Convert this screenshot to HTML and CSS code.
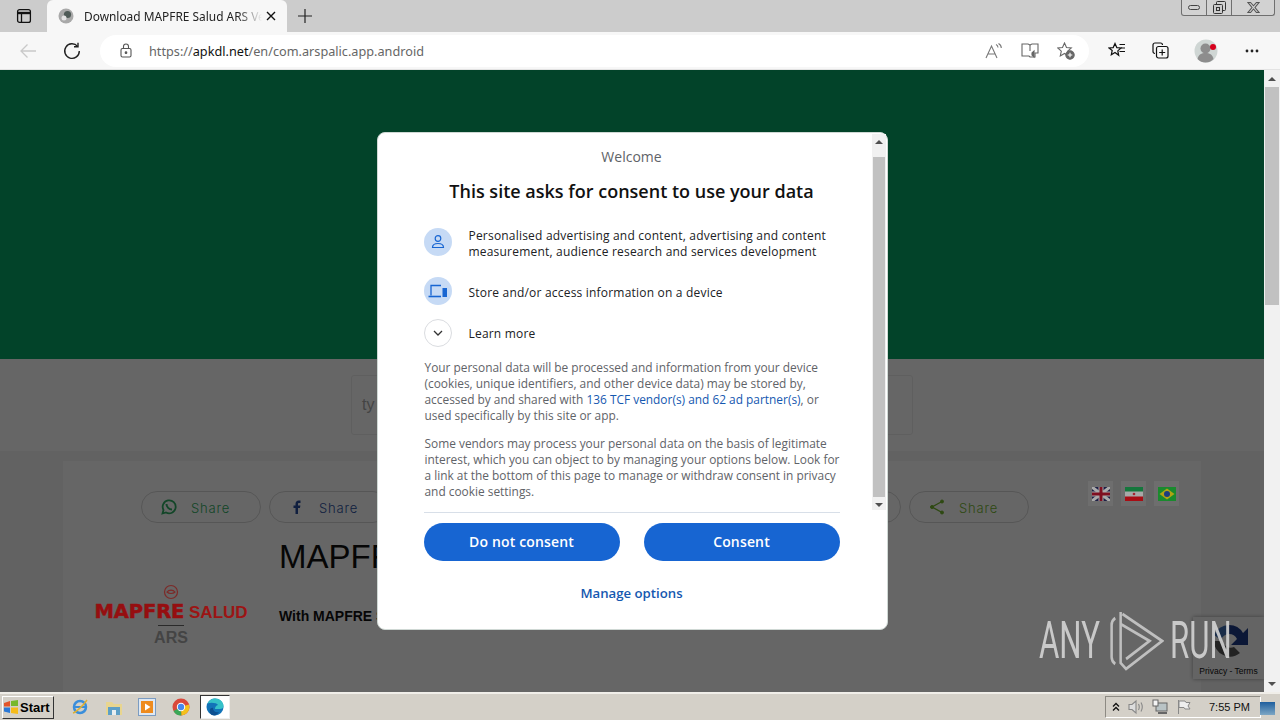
FILE: index.html
```html
<!DOCTYPE html>
<html lang="en">
<head>
<meta charset="utf-8">
<title>Download MAPFRE Salud ARS</title>
<link rel="stylesheet" href="styles.css">
</head>
<body>
<div class="tabstrip">
  <div class="tabside">
    <svg width="16" height="16" viewBox="0 0 16 16" fill="none" stroke="#111" stroke-width="1.3"><rect x="1.6" y="1.6" width="12.8" height="12.8" rx="2"/><path d="M1.6 5h12.8" stroke-width="2.4"/><path d="M5.5 5v9.4"/></svg>
  </div>
  <div class="tab">
    <svg width="16" height="16" viewBox="0 0 16 16"><circle cx="8" cy="8" r="7.5" fill="#a9a9a9"/><circle cx="9.5" cy="6.5" r="3.6" fill="#4f5b57"/><circle cx="6" cy="10" r="2.5" fill="#e3e3e3"/></svg>
    <span class="tabtitle">Download MAPFRE Salud ARS Ve</span>
    <svg class="tabclose" width="10" height="10" viewBox="0 0 10 10" stroke="#111" stroke-width="1.4"><path d="M1 1l8 8M9 1l-8 8"/></svg>
  </div>
  <svg class="newtab" width="16" height="16" viewBox="0 0 16 16" stroke="#222" stroke-width="1.2"><path d="M8 1v14M1 8h14"/></svg>
  <div class="winctl">
    <span class="wbtn"><svg width="12" height="6" viewBox="0 0 12 6" fill="none" stroke="#444"><rect x=".5" y=".5" width="11" height="4" rx="2"/></svg></span>
    <span class="wbtn"><svg width="13" height="13" viewBox="0 0 13 13" fill="none" stroke="#333"><rect x="3.5" y=".5" width="9" height="9" rx="1"/><rect x=".5" y="3.5" width="9" height="9" rx="1" fill="#ccc"/><rect x="3.5" y="6.5" width="3" height="3"/></svg></span>
    <span class="wbtn wclose"><svg width="13" height="11" viewBox="0 0 13 11" stroke="#555" stroke-width="1.1" fill="none"><path d="M1 .5h2.5l3 3.3 3-3.3H12L8 5.500l4 5H9.500l-3-3.500-3 3.500H1l4-5z"/></svg></span>
  </div>
</div>

<div class="toolbar">
  <svg class="back" width="18" height="16" viewBox="0 0 18 16" fill="none" stroke="#c9c9c9" stroke-width="1.3"><path d="M17 8H2M8.500 1.500L2 8l6.500 6.500"/></svg>
  <svg class="reload" width="18" height="18" viewBox="0 0 18 18" fill="none" stroke="#222" stroke-width="1.4"><path d="M14.600 4.400A7.300 7.300 0 1 0 16.300 9"/><path d="M15 .8v4h-4"/></svg>
  <div class="omnibox">
    <svg width="12" height="15" viewBox="0 0 12 15" fill="none" stroke="#555" stroke-width="1.1"><rect x="1" y="5.500" width="10" height="8.500" rx="1.500"/><path d="M3.500 5.500V3.500a2.500 2.500 0 0 1 5 0v2"/><circle cx="6" cy="9.700" r=".8" fill="#555"/></svg>
    <span class="url">https://<b>apkdl.net</b>/en/com.arspalic.app.android</span>
    <span class="omni-icons">
      <svg width="18" height="16" viewBox="0 0 18 16" fill="none" stroke="#777" stroke-width="1.1"><path d="M1 15L6.500 3 12 15M3 11h7"/><path d="M11 1.500c1.500.8 2 2 2 3M13.500 .5c1.800 1 2.800 2.800 2.800 4.500"/></svg>
      <svg width="18" height="16" viewBox="0 0 18 16" fill="none" stroke="#666" stroke-width="1.1"><path d="M1 1h6l2 1 2-1h6v9h-3v4H9l-1-1H1z"/><path d="M9 2v6"/><path d="M11 10l2-2v6l-2-2z" fill="#666"/></svg>
      <svg width="18" height="18" viewBox="0 0 18 18" fill="none" stroke="#666" stroke-width="1.100"><path d="M7.500 1l2 4.500 4.800.5-3.600 3.200 1 4.800-4.200-2.500-4.200 2.500 1-4.800L.7 6l4.800-.5z"/><circle cx="13" cy="13" r="4.200" fill="#666"/><path d="M13 10.700v4.600M10.700 13h4.600" stroke="#fff"/></svg>
    </span>
  </div>
  <div class="tool-icons">
    <svg width="18" height="17" viewBox="0 0 18 17" fill="none" stroke="#111" stroke-width="1.200"><path d="M7 1.500l1.800 4.100 4.200.4-3.200 2.900.9 4.400L7 10.500l-3.700 2.300.9-4.400L1 6l4.200-.4z"/><path d="M11.500 2.500H17M13 6h4M11.500 9.500H17"/></svg>
    <svg width="17" height="17" viewBox="0 0 17 17" fill="none" stroke="#111" stroke-width="1.200"><path d="M3 11.500C1.800 11.500 1 10.700 1 9.500V3c0-1.200.8-2 2-2h5.500c1.200 0 2 .8 2 2"/><rect x="4.500" y="4.500" width="11.500" height="11.500" rx="2"/><path d="M10.200 7.500v6M7.200 10.500h6"/></svg>
    <span class="avatar">
      <svg width="24" height="24" viewBox="0 0 24 24"><circle cx="12" cy="12" r="11.500" fill="#cfd6d4"/><circle cx="11.500" cy="9.500" r="5" fill="#8d8d8d"/><path d="M3.500 20c1-4.500 4-6 8-6s7 1.500 8 6c-2 2.500-5 3.500-8 3.500s-6-1-8-3.500z" fill="#8d8d8d"/><circle cx="19" cy="8" r="3" fill="#d6001c"/></svg>
    </span>
    <svg class="menu" width="14" height="4" viewBox="0 0 14 4" fill="#222"><circle cx="2" cy="2" r="1.400"/><circle cx="7" cy="2" r="1.400"/><circle cx="12" cy="2" r="1.400"/></svg>
  </div>
</div>

<div class="viewport">
  <div class="page">
    <div class="hero"></div>
    <div class="searchband"><div class="searchbox">ty</div></div>
    <div class="card">
      <div class="shares">
        <span class="share c-wa"><svg width="16" height="16" viewBox="0 0 16 16" fill="none" stroke="currentColor" stroke-width="1.800"><path d="M1.500 14.500l1-3.500a6.500 6.500 0 1 1 2.500 2.500z"/><path d="M5.500 5c0 3 2.500 5.500 5.500 5.500" stroke-width="2"/></svg><em>Share</em></span>
        <span class="share c-fb"><svg width="16" height="16" viewBox="0 0 16 16" fill="currentColor"><path d="M6.500 15V9H4.500V6.500h2V5c0-2.200 1.200-3.500 3.200-3.500h1.800V4H10c-.8 0-1 .4-1 1.100v1.400h2.400L11 9H9v6z"/></svg><em>Share</em></span>
        <span class="share"><em>Share</em></span>
        <span class="share"><em>Share</em></span>
        <span class="share"><em>Share</em></span>
        <span class="share"><em>Share</em></span>
        <span class="share c-sh"><svg width="16" height="16" viewBox="0 0 16 16" fill="currentColor" stroke="currentColor"><path d="M13 2.500L3 8l10 5.500" fill="none" stroke-width="1.400"/><circle cx="13" cy="2.500" r="1.500"/><circle cx="3" cy="8" r="1.500"/><circle cx="13" cy="13.500" r="1.500"/></svg><em>Share</em></span>
      </div>
      <div class="flags">
        <span class="flag"><svg width="18" height="14" viewBox="0 0 18 14"><rect width="18" height="14" fill="#1d1f45"/><path d="M0 0l18 14M18 0L0 14" stroke="#aaa" stroke-width="3"/><path d="M9 0v14M0 7h18" stroke="#aaa" stroke-width="5"/><path d="M9 0v14M0 7h18" stroke="#7f0f20" stroke-width="3"/></svg></span>
        <span class="flag"><svg width="18" height="14" viewBox="0 0 18 14"><rect width="18" height="14" fill="#a8a8a8"/><rect width="18" height="4.500" fill="#14773c"/><rect y="9.500" width="18" height="4.500" fill="#a80d14"/><circle cx="9" cy="7" r="1.300" fill="#a32430"/></svg></span>
        <span class="flag"><svg width="18" height="14" viewBox="0 0 18 14"><rect width="18" height="14" fill="#1a8a2e"/><path d="M9 1.500L16.500 7 9 12.500 1.500 7z" fill="#b0a314"/><circle cx="9" cy="7" r="3" fill="#1c3c80"/></svg></span>
      </div>
      <div class="app">
        <div class="logo">
          <svg width="16" height="16" viewBox="0 0 16 16" fill="none" stroke="#7c2a28" stroke-width="1.200"><circle cx="8" cy="8" r="6.500"/><path d="M4 8c2-2.500 6-2.500 8 0-2 2-6 2-8 0z"/></svg>
          <div class="logo-name"><b>MAPFRE</b> <span>SALUD</span></div>
          <div class="logo-rule"></div>
          <div class="logo-ars">ARS</div>
        </div>
        <div class="appinfo">
          <h2>MAPFRE Salud ARS</h2>
          <p>With MAPFRE Salud ARS</p>
        </div>
      </div>
    </div>
    <div class="recaptcha">
      <svg width="40" height="40" viewBox="0 0 40 40" fill="none"><path d="M20 4a16 16 0 0 1 14 8l5-5v17H22l6-6a9 9 0 0 0-8-5z" fill="#1d3a87"/><path d="M20 4A16 16 0 0 0 5 14l7 5a9 9 0 0 1 8-6z" fill="#3f6fb5"/><path d="M5 20a16 16 0 0 0 26 12l-6-6a9 9 0 0 1-12-6z" fill="#555"/></svg>
      <div class="rc-links">Privacy - Terms</div>
    </div>
  </div>

  <div class="vscroll pagebar">
    <span class="arrow up"></span>
    <span class="track"><i class="thumb"></i></span>
    <span class="arrow down"></span>
  </div>

  <div class="overlay">
    <div class="dialog">
      <div class="vscroll dlgbar">
        <span class="arrow up"></span>
        <span class="track"><i class="thumb"></i></span>
        <span class="arrow down"></span>
      </div>
      <p class="welcome">Welcome</p>
      <h1>This site asks for consent to use your data</h1>
      <div class="purpose tall">
        <span class="dot"><svg width="16" height="16" viewBox="0 0 16 16" fill="none" stroke="#1765d2" stroke-width="1.200"><circle cx="8" cy="4.500" r="2.800"/><path d="M2.500 13.500c0-3 2.500-4 5.500-4s5.500 1 5.500 4z"/></svg></span>
        <p>Personalised advertising and content, advertising and content measurement, audience research and services development</p>
      </div>
      <div class="purpose store">
        <span class="dot"><svg width="20" height="14" viewBox="0 0 20 14" fill="none" stroke="#1765d2" stroke-width="1.300"><path d="M13 1.500H3v10"/><path d="M.5 12.500h12.500" stroke-width="1.600"/><rect x="14.500" y="4" width="4.500" height="9" fill="#1765d2" stroke="none"/></svg></span>
        <p>Store and/or access information on a device</p>
      </div>
      <div class="purpose more">
        <span class="dot plain"><svg width="10" height="6" viewBox="0 0 10 6" fill="none" stroke="#333" stroke-width="1.300"><path d="M1 1l4 4 4-4"/></svg></span>
        <p>Learn more</p>
      </div>
      <p class="body">Your personal data will be processed and information from your device (cookies, unique identifiers, and other device data) may be stored by, accessed by and shared with <a>136 TCF vendor(s) and 62 ad partner(s)</a>, or used specifically by this site or app.</p>
      <p class="body second">Some vendors may process your personal data on the basis of legitimate interest, which you can object to by managing your options below. Look for a link at the bottom of this page to manage or withdraw consent in privacy and cookie settings.</p>
      <div class="actions">
        <button class="btn">Do not consent</button>
        <button class="btn">Consent</button>
      </div>
      <a class="manage">Manage options</a>
    </div>
  </div>

  <div class="watermark">
    <span class="wm-text">ANY</span>
    <svg width="56" height="62" viewBox="0 0 62 62" preserveAspectRatio="none" fill="none" stroke="#c9c9c9" stroke-width="2.800"><path d="M8 8c-3 2-4 4-4 7v32c0 3 1 5 4 7"/><path d="M14 2v51l6 6 40-28L16 4"/><path d="M14 14l32 17-26 18"/></svg>
    <span class="wm-text">RUN</span>
  </div>
</div>

<div class="taskbar">
  <button class="start">
    <svg width="16" height="14" viewBox="0 0 16 14"><path d="M1 3l6-2v5.500H1z" fill="#e2552a"/><path d="M8 1l7-1v6H8z" fill="#76b82a"/><path d="M1 7.500h6V13l-6-1.500z" fill="#2a78d6"/><path d="M8 7.500h7V14l-7-1z" fill="#f5bb1a"/></svg>
    Start
  </button>
  <div class="quick">
    <svg width="18" height="18" viewBox="0 0 18 18" fill="none"><circle cx="9" cy="9" r="6" stroke="#3a8edb" stroke-width="2.500"/><path d="M3 9h12" stroke="#3a8edb" stroke-width="2"/><path d="M2 15c3-1 10-7 14-13" stroke="#e0b030" stroke-width="1.400"/></svg>
    <svg width="18" height="18" viewBox="0 0 18 18"><path d="M1 4h6l2 2h8v11H1z" fill="#e8d58f"/><rect x="3" y="9" width="12" height="8" fill="#5e9fc6"/><rect x="7" y="12" width="4" height="5" fill="#e8eef0"/></svg>
    <svg width="18" height="18" viewBox="0 0 18 18"><rect x=".5" y=".5" width="17" height="17" fill="#dfe8f2" stroke="#7b9cc2"/><rect x="3" y="3" width="12" height="12" fill="#ee8b1e"/><path d="M7 5.500v7l5.500-3.500z" fill="#fff"/></svg>
    <svg width="18" height="18" viewBox="0 0 18 18"><circle cx="9" cy="9" r="8.500" fill="#d9483b"/><path d="M9 9L1.500 13a8.500 8.500 0 0 0 8 4.500z" fill="#3aa757"/><path d="M9 9l7.900-2.500a8.500 8.500 0 0 1-7.400 11z" fill="#f3c11b"/><circle cx="9" cy="9" r="4.200" fill="#fff"/><circle cx="9" cy="9" r="3.200" fill="#4787ed"/></svg>
    <span class="edge"><svg width="18" height="18" viewBox="0 0 18 18"><circle cx="9" cy="9" r="8.500" fill="#1273b8"/><path d="M1.500 6C3 2 6 .5 9 .5c5 0 8.500 3.500 8.500 7.500 0 2-1.500 3-3.500 3H9c0-2 1-3.500 3-4-1-2-7-3-10.500-1.500z" fill="#35c1c8"/><path d="M7 10c0 3 2.500 5 6 4-1.500 2-3 3.500-5 3.500-3 0-5-3-4-6 .5-1 2-2 3-1.500z" fill="#0c4f90"/></svg></span>
  </div>
  <div class="tray">
    <svg width="8" height="10" viewBox="0 0 8 10" fill="none" stroke="#111" stroke-width="1.300"><path d="M1 4.500l3-3 3 3M1 8.500l3-3 3 3"/></svg>
    <svg width="16" height="16" viewBox="0 0 16 16" fill="none" stroke="#888" stroke-width="1.100"><path d="M1 5.500h3L8 2v12l-4-3.500H1z" fill="#ddd"/><path d="M10.500 5c1 2 1 4 0 6M13 3.500c1.700 3 1.700 6 0 9"/></svg>
    <svg width="16" height="16" viewBox="0 0 16 16" fill="none" stroke="#666"><rect x="4" y="4" width="11" height="8" fill="#b9c3c5"/><rect x="1" y="1" width="5" height="6" fill="#f4f4f4"/><path d="M6 14h9" stroke-width="2"/></svg>
    <svg width="16" height="16" viewBox="0 0 16 16" fill="none" stroke="#888"><path d="M2.500 1v14"/><path d="M3 2h6l1 1.500h4L12 7l2 3H9L8 8.500H3z" fill="#eee"/></svg>
    <span class="clock">7:55 PM</span>
  </div>
  <span class="showdesk"></span>
</div>
</body>
</html>
```

FILE: styles.css
```css
* { box-sizing: border-box; }
html, body { margin: 0; height: 720px; overflow: hidden; }
body { display: flex; flex-direction: column; font-family: "Open Sans", "Noto Sans", sans-serif; background: #fff; }

.tabstrip { flex: 0 0 32px; display: flex; align-items: flex-end; background: #cccccc; position: relative; }
.tabside { width: 47px; height: 32px; display: flex; align-items: center; justify-content: center; }
.tab { width: 240px; height: 32px; background: #f7f7f7; border-radius: 6px 6px 0 0; display: flex; align-items: center; padding: 0 11px 0 11px; color: #222; }
.tabtitle { margin-left: 10px; width: 178px; white-space: nowrap; overflow: hidden; font-family: "Noto Sans", sans-serif; font-size: 11.900px; -webkit-mask-image: linear-gradient(90deg, #000 86%, transparent); mask-image: linear-gradient(90deg, #000 86%, transparent); }
.tabclose { margin-left: auto; }
.newtab { margin: 0 0 8px 10px; }
.winctl { position: absolute; right: 5px; top: 0; height: 16px; display: flex; border: 1px solid #6f6f6f; border-top: 0; border-radius: 0 0 3px 3px; background: #d2d2d2; }
.wbtn { width: 25px; display: flex; align-items: center; justify-content: center; border-right: 1px solid #6f6f6f; }
.wclose { width: 42px; border-right: 0; }

.toolbar { flex: 0 0 38px; background: #f7f7f7; display: flex; align-items: center; border-bottom: 1px solid #e3e3e3; }
.back { margin-left: 19px; }
.reload { margin-left: 26px; }
.omnibox { margin-left: 19px; width: 989px; height: 32px; border-radius: 16px; background: #fff; display: flex; align-items: center; padding: 0 14px 0 20px; }
.url { margin-left: 17px; flex: 1; font-size: 12.700px; color: #666; font-family: "Noto Sans", sans-serif; }
.url b { font-weight: 400; color: #111; }
.omni-icons { display: flex; align-items: center; gap: 18px; }
.tool-icons { margin-left: 19px; display: flex; align-items: center; }
.tool-icons svg:nth-child(2) { margin-left: 26px; }
.avatar { margin-left: 25px; display: flex; }
.menu { margin-left: 27px; }

.viewport { flex: 1; position: relative; display: flex; overflow: hidden; }
.page { flex: 1; background: #f6f6f6; position: relative; }
.hero { height: 289px; background: #06a866; }
.searchband { height: 92px; background: #fff; padding: 16px 0 0 351px; }
.searchbox { width: 562px; height: 60px; border: 1px solid #eee; border-radius: 3px; background: #fff; color: #aaa; font-size: 16px; font-family: "Liberation Sans", sans-serif; padding: 20px 10px; }
.card { margin: 10px 63px 0; height: 300px; background: #fff; padding: 30px 20px 0 78px; position: relative; }
.shares { display: flex; gap: 8px; }
.share { width: 120px; height: 32px; padding: 2px 11px 0 0; border: 1px solid #d8d8d8; border-radius: 16px; display: flex; align-items: center; justify-content: center; gap: 14px; color: #888; font-size: 13px; font-family: "Inter", sans-serif; }
.share svg { margin-top: -2px; }
.share em { font-style: normal; letter-spacing: .8px; font-weight: 300; }
.c-wa { color: #2fae64; }
.c-fb { color: #2a4f9e; }
.c-sh { color: #74b62f; }
.flags { position: absolute; top: 20px; right: 22px; display: flex; gap: 8px; z-index: 3; }
.flag { width: 25px; height: 25px; background: #6e6e6e; display: flex; align-items: center; justify-content: center; }
.app { position: absolute; top: 77px; left: 32px; display: flex; }
.logo { width: 152px; margin-top: 46px; display: flex; flex-direction: column; align-items: center; font-family: "Liberation Sans", sans-serif; position: relative; z-index: 3; }
.logo-name { font-size: 17px; line-height: 20px; margin-top: 2px; color: #9c1414; white-space: nowrap; }
.logo-name b { font-family: "DejaVu Sans", sans-serif; font-weight: 700; font-size: 19.500px; letter-spacing: -.1px; color: #960e10; -webkit-text-stroke: .5px #960e10; }
.logo-name span { font-weight: 700; }
.logo-rule { width: 26px; height: 1px; background: #2a2a2a; margin-top: 2px; }
.logo-ars { font-size: 16px; font-weight: 700; color: #444; line-height: 20px; margin-top: 2px; }
.appinfo { margin-left: 32px; font-family: "Liberation Sans", sans-serif; color: #111; }
.appinfo h2 { margin: 0; font-size: 33px; font-weight: 400; line-height: 38px; white-space: nowrap; }
.appinfo p { margin: 32px 0 0; font-size: 14px; font-weight: 700; white-space: nowrap; }
.recaptcha { position: absolute; right: 0; top: 547px; width: 71px; height: 62px; background: #f9f9f9; box-shadow: 0 0 4px #999; display: flex; flex-direction: column; align-items: center; font-family: "Liberation Sans", sans-serif; }
.recaptcha svg { margin-top: 4px; }
.rc-links { font-size: 8.500px; color: #111; white-space: nowrap; margin-top: 5px; }

.vscroll { display: flex; flex-direction: column; width: 16px; background: #f1f1f1; }
.pagebar { flex: 0 0 16px; position: relative; z-index: 3; }
.arrow { flex: 0 0 17px; display: flex; align-items: center; justify-content: center; }
.arrow::before { content: ""; border-left: 4px solid transparent; border-right: 4px solid transparent; }
.up::before { border-bottom: 4px solid #505050; }
.down::before { border-top: 4px solid #505050; }
.track { flex: 1; display: block; padding: 0 1px; }
.thumb { display: block; background: #c1c1c1; height: 218px; }

.overlay { position: absolute; left: 0; top: 0; right: 16px; bottom: 0; background: rgba(0,0,0,.6); display: flex; align-items: center; justify-content: center; z-index: 2; }
.dialog { position: relative; width: 511px; height: 498px; background: #fff; border-radius: 8px; border: 1px solid #cfd8d4; padding: 14px 47px 0 46px; color: #3c4043; }
.dlgbar { position: absolute; right: 1px; top: 1px; width: 14px; height: 376px; }
.dlgbar .arrow { flex-basis: 16px; }
.dlgbar .track { padding: 7px 0 0; }
.dlgbar .thumb { height: 340px; margin: 0 1px; background: #c1c1c1; }
.welcome { margin: 0; text-align: center; font-size: 14px; line-height: 20px; color: #5f6368; font-weight: 400; }
.dialog h1 { margin: 12px 0 0; text-align: center; font-size: 18px; line-height: 24px; font-weight: 600; color: #111; white-space: nowrap; }
.purpose { display: flex; align-items: center; }
.purpose p { margin: 2px 0 0 17px; font-size: 12px; letter-spacing: .2px; line-height: 16px; color: #202124; }
.purpose.tall { margin-top: 22px; }
.purpose.tall p { margin-top: 3px; margin-bottom: -1px; }
.purpose.store { margin-top: 18px; }
.purpose.store p { margin-top: 4px; }
.purpose.more { margin-top: 14px; }
.dot { flex: 0 0 28px; height: 28px; border-radius: 50%; background: #c6daf5; display: flex; align-items: center; justify-content: center; }
.dot.plain { background: #fff; border: 1px solid #dadce0; }
.body { margin: 12px -4px 0 1px; font-size: 11.900px; line-height: 16px; color: #5f6368; }
.body.second { margin-top: 12px; }
.body a { color: #1558b0; }
.actions { margin-top: 13px; padding-top: 10px; border-top: 1px solid #d8dfe8; display: flex; justify-content: space-between; }
.btn { width: 196px; height: 38px; padding: 0 0 2px; border: 0; border-radius: 19px; background: #1765d2; color: #fff; font-family: "Open Sans", sans-serif; font-size: 14px; letter-spacing: .15px; font-weight: 600; }
.manage { display: block; margin-top: 22px; text-align: center; font-size: 13.200px; line-height: 20px; font-weight: 600; color: #1558b0; }

.watermark { position: absolute; left: 1039px; top: 540px; display: flex; align-items: center; gap: 6px; z-index: 4; opacity: .9; }
.watermark svg { margin-left: 1px; }
.wm-text { display: block; width: 62px; font-family: "Roboto", sans-serif; font-weight: 400; font-size: 52px; line-height: 62px; color: #d4d4d4; transform: scaleX(.6); transform-origin: left center; white-space: nowrap; }

.taskbar { flex: 0 0 28px; background: #d4d0c8; border-top: 2px solid #f0eee9; display: flex; align-items: center; position: relative; }
.start { margin-left: 2px; width: 52px; height: 23px; display: flex; align-items: center; gap: 1px; padding: 0; background: #d4d0c8; border: 1px solid; border-color: #fff #333 #333 #fff; font-family: "Liberation Sans", sans-serif; font-size: 13px; font-weight: 700; color: #000; }
.quick { margin-left: 17px; display: flex; align-items: center; gap: 15.700px; }
.edge { width: 30px; height: 24px; margin-left: -6px; background: #fff; border: 1px solid #333; border-right-color: #eee; border-bottom-color: #eee; display: flex; align-items: center; justify-content: center; }
.tray { margin-left: auto; margin-right: 19px; height: 22px; width: 156px; display: flex; align-items: center; gap: 8px; padding-left: 6px; border: 1px solid #8d8a83; border-right-color: #fff; border-bottom-color: #fff; font-family: "Liberation Sans", sans-serif; font-size: 11px; color: #111; }
.clock { margin-left: 9px; white-space: nowrap; }
.showdesk { position: absolute; right: 5px; top: 8px; width: 15px; height: 13px; background: linear-gradient(#1f5f9e, #7da6c4); }
```
